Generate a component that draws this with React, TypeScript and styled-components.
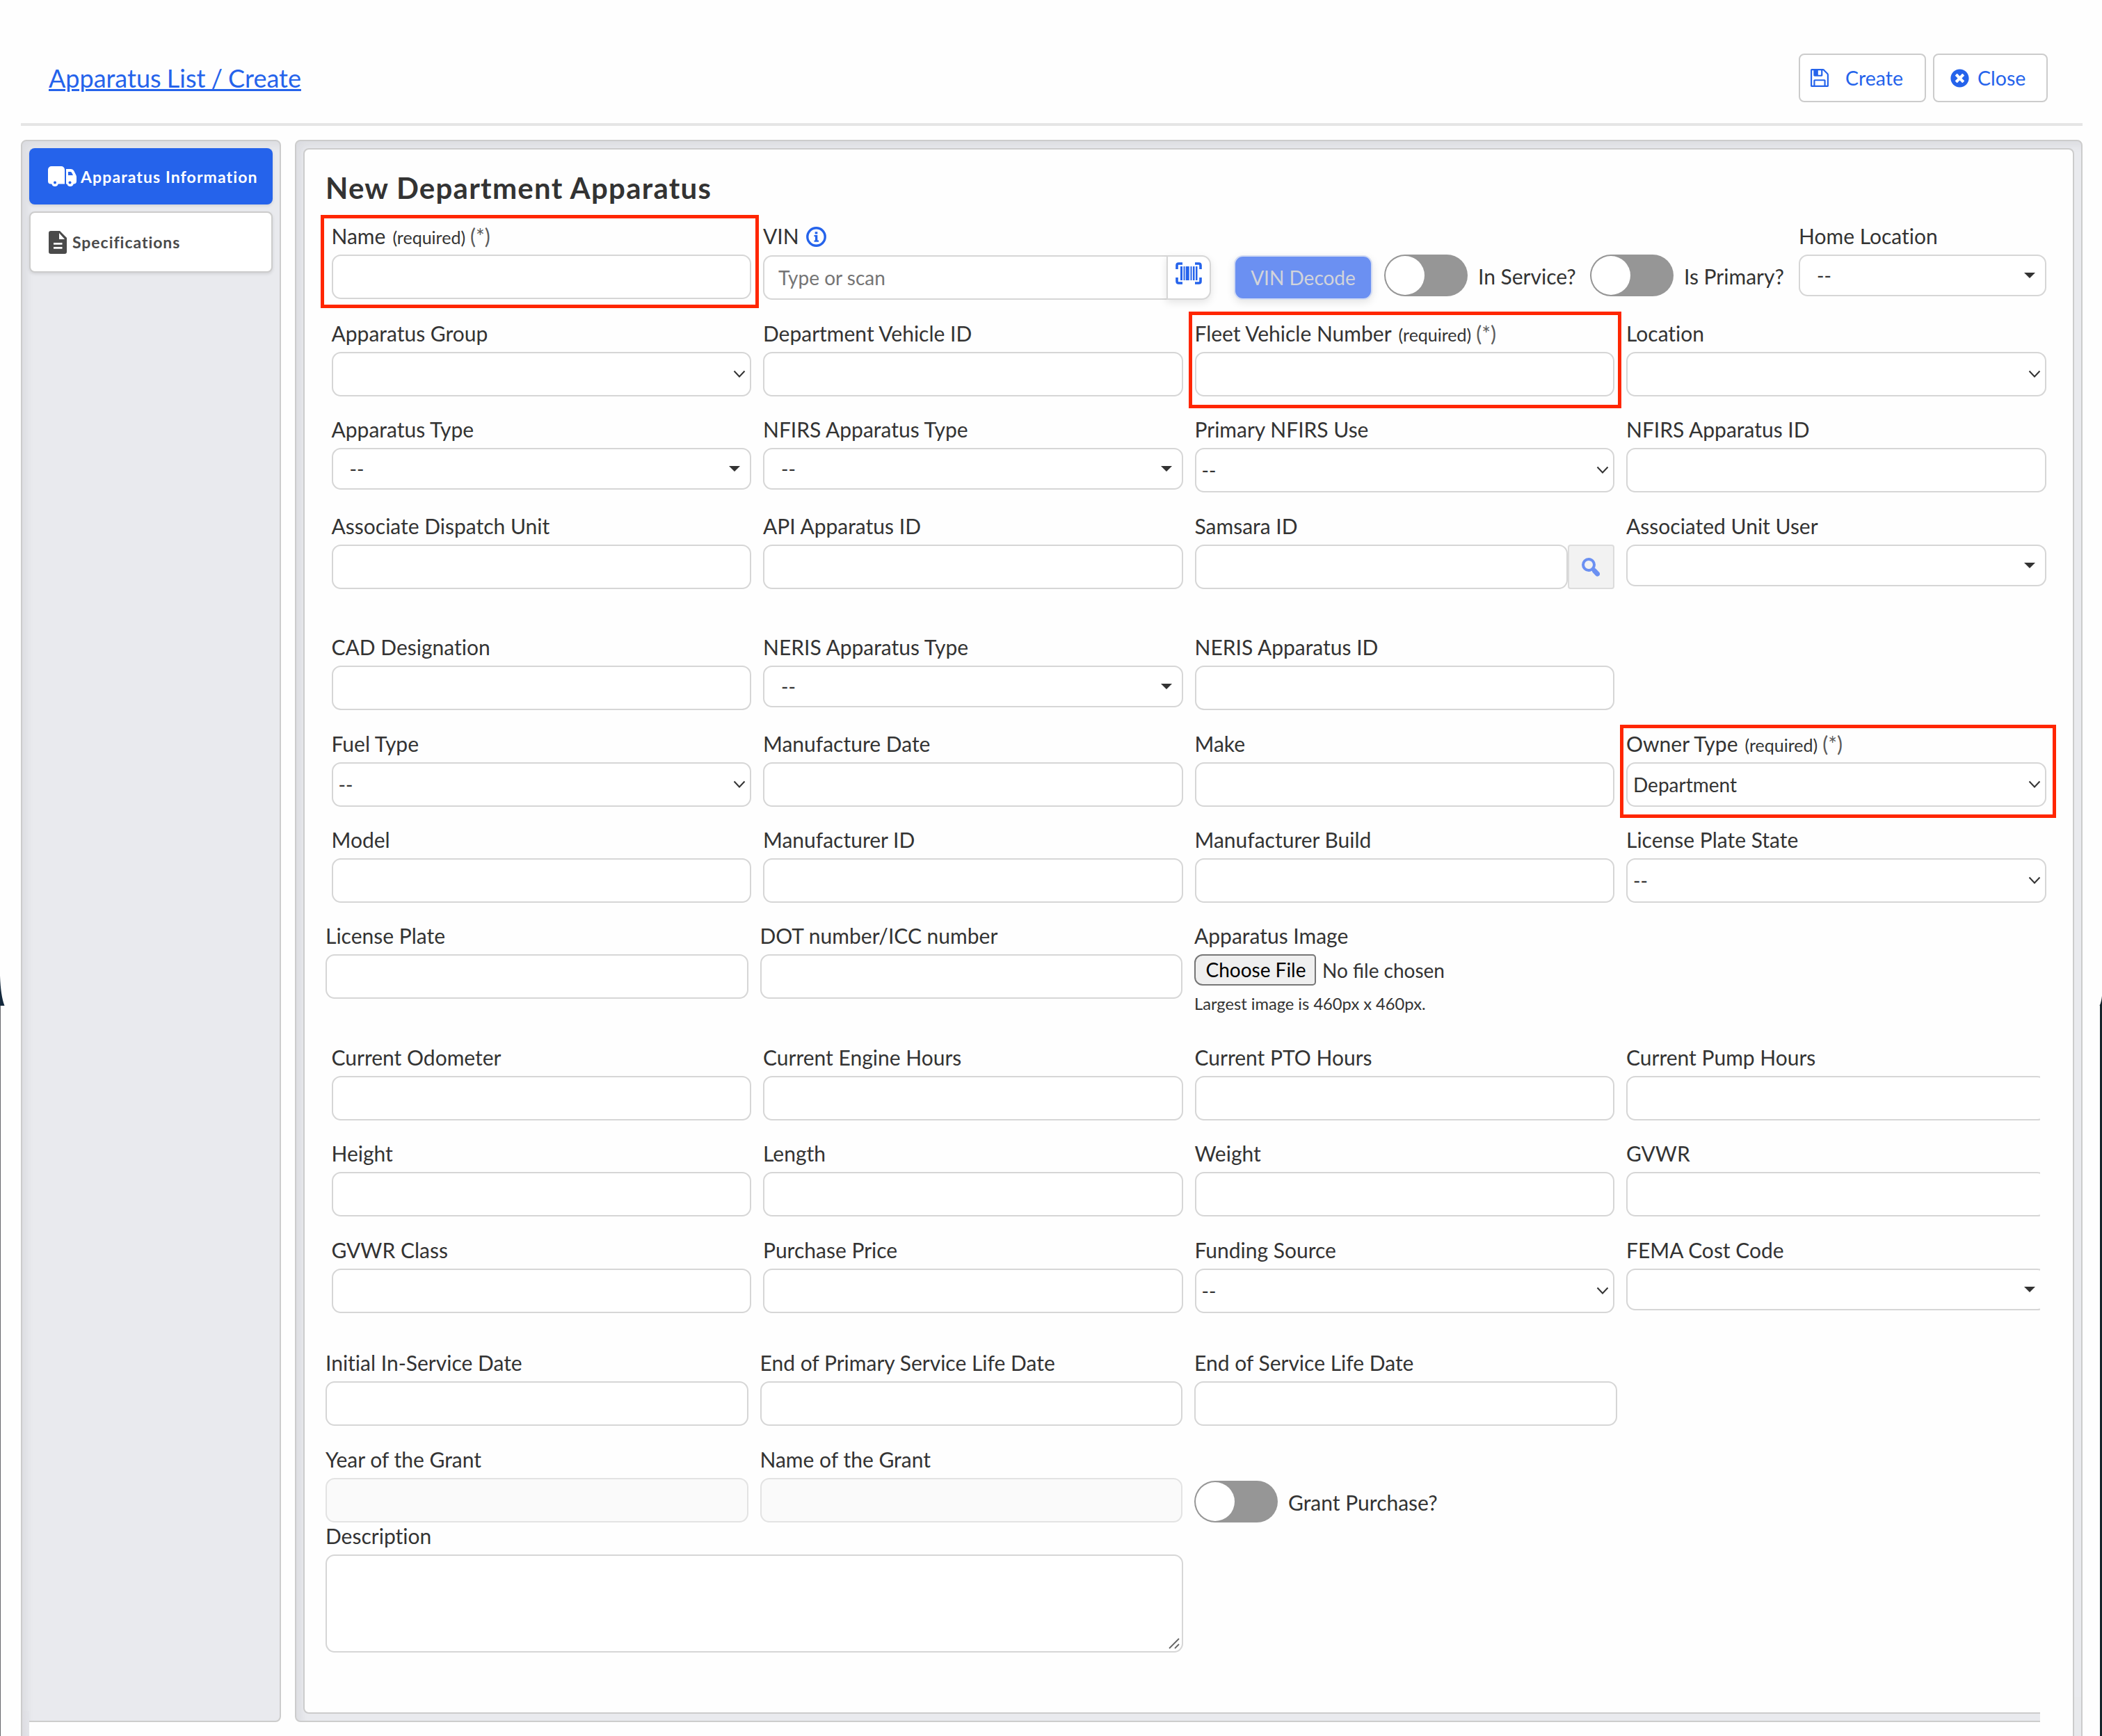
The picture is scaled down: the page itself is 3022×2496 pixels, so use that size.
// src/pages/ApparatusCreate.tsx
import React from 'react';
import styled, { createGlobalStyle, css } from 'styled-components';
import { FaTimesCircle } from 'react-icons/fa';

const GlobalStyle = createGlobalStyle`
  * {
    box-sizing: border-box;
  }

  body {
    margin: 0;
    background: #fefefe;
    color: #333;
    font-family: Lato, sans-serif;
    font-size: 30px;
    font-variant-ligatures: none;
  }
`;

const Page = styled.div`
  position: relative;
  width: 3022px;
  height: 2496px;
  padding: 0 28px 0 30px;
  overflow: hidden;
`;

const TopBar = styled.header`
  display: flex;
  align-items: center;
  justify-content: space-between;
  height: 181px;
  padding: 47px 50px 0 40px;
  border-bottom: 4px solid #e5e5e5;
`;

const Breadcrumb = styled.a`
  color: #2563eb;
  font-size: 36px;
  line-height: 44px;
  text-decoration: underline;
  text-decoration-thickness: 3px;
  word-spacing: -1px;
`;

const TopActions = styled.div`
  display: flex;
  gap: 10px;
`;

const ActionButton = styled.button<{ $width: number; $gap: number }>`
  display: flex;
  align-items: center;
  gap: ${({ $gap }) => $gap}px;
  width: ${({ $width }) => $width}px;
  height: 70px;
  padding: 0 0 0 15px;
  border: 2px solid #ccc;
  border-radius: 8px;
  background: #fff;
  color: #2563eb;
  font: 28.5px Lato, sans-serif;
`;

const CloseButton = styled(ActionButton)`
  padding-left: 23px;
`;

const Columns = styled.div`
  display: flex;
  gap: 20px;
  margin-top: 20px;
  height: 2275px;
`;

const greyBox = css`
  border: 2px solid #ccc;
  border-radius: 8px;
  background: #e9eaee;
  box-shadow: inset 8px 8px 12px -2px rgba(40, 40, 60, 0.07);
`;

const Sidebar = styled.nav`
  ${greyBox}
  display: flex;
  flex-direction: column;
  gap: 10px;
  width: 374px;
  padding: 10px;
`;

const SidebarItem = styled.div<{ $active?: boolean }>`
  display: flex;
  align-items: center;
  gap: ${({ $active }) => ($active ? 6 : 8)}px;
  height: ${({ $active }) => ($active ? 81 : 88)}px;
  padding-left: ${({ $active }) => ($active ? 27 : 26)}px;
  border: ${({ $active }) => ($active ? 'none' : '2px solid #ccc')};
  border-radius: 8px;
  background: ${({ $active }) => ($active ? '#2563eb' : '#fff')};
  box-shadow: 0 2px 4px rgba(0, 0, 0, 0.1);
  color: ${({ $active }) => ($active ? '#fff' : '#4a4a4a')};
  font-size: 23px;
  font-weight: 700;
  letter-spacing: ${({ $active }) => ($active ? 1.1 : 0.95)}px;
  white-space: nowrap;
`;

const Panel = styled.main`
  ${greyBox}
  width: 2570px;
  padding: 10px;
`;

const Card = styled.section`
  height: 2251px;
  padding: 30px 0 0 30px;
  border: 2px solid #ccc;
  border-radius: 8px;
  background: #fefefe;
`;

const Heading = styled.h1`
  margin: 0 0 29px;
  font-size: 42px;
  font-weight: 700;
  letter-spacing: 1.25px;
  line-height: 50px;
`;

/* one line of fields; inset rows start a little further right and use narrower columns */
const Row = styled.div<{ $top?: number; $inset?: boolean }>`
  display: grid;
  grid-template-columns: repeat(4, ${({ $inset }) => ($inset ? 603.5 : 607.5)}px);
  column-gap: 17px;
  height: 106px;
  margin-top: ${({ $top }) => $top ?? 0}px;
  padding-left: ${({ $inset }) => ($inset ? 8.5 : 0)}px;
`;

/* the measurements block is cut off just before its right edge */
const ClippedRows = styled.div`
  width: 2465px;
  overflow: hidden;
`;

const FieldBox = styled.div`
  position: relative;
  min-width: 0;
`;

const Label = styled.label`
  display: flex;
  align-items: baseline;
  height: 42px;
  line-height: 30px;
  white-space: pre;

  small {
    margin-left: 10px;
    font-size: 25px;
  }

  span {
    margin-left: 7px;
    color: #5c5c5c;
  }
`;

const control = css`
  display: flex;
  align-items: center;
  width: 100%;
  height: 64px;
  border: 2px solid #d6d6d6;
  border-radius: 13px;
  background: #fff;
`;

const Input = styled.div<{ $disabled?: boolean }>`
  ${control}
  ${({ $disabled }) =>
    $disabled && 'border-color: #e3e3e3; background: #fafafa;'}
`;

const NativeSelect = styled.div`
  ${control}
  justify-content: space-between;
  padding: 0 6px 0 8px;
  font-size: 28px;
`;

const SearchSelect = styled.div`
  ${control}
  justify-content: space-between;
  height: 60px;
  padding: 0 14px 0 24px;
  font-size: 28px;
`;

const Highlight = styled.div<{ $box: [number, number, number, number] }>`
  position: absolute;
  left: ${({ $box }) => $box[0]}px;
  top: ${({ $box }) => $box[1]}px;
  width: ${({ $box }) => $box[2]}px;
  height: ${({ $box }) => $box[3]}px;
  border: 5px solid #ff2600;
`;

const VinRow = styled.div`
  display: flex;
  align-items: flex-start;
  height: 106px;
  padding-left: 8.5px;
`;

const NameColumn = styled.div`
  width: 603px;
  margin-right: 17.5px;
`;

const VinColumn = styled.div`
  width: 644px;
  margin-right: 33px;

  label svg {
    align-self: flex-start;
    margin: 2px 0 0 10px;
  }
`;

const VinGroup = styled.div`
  display: flex;
  margin-top: 1px;
`;

const VinInput = styled.input`
  width: 580px;
  height: 64px;
  padding: 0 0 0 20px;
  border: 2px solid #d6d6d6;
  border-right: 0;
  border-radius: 13px 0 0 13px;
  background: #fff;
  font: 28px Lato, sans-serif;

  &::placeholder {
    color: #757575;
  }
`;

const ScanButton = styled.button`
  display: flex;
  align-items: flex-start;
  width: 64px;
  height: 64px;
  padding: 8px 0 0 11px;
  border: 2px solid #d6d6d6;
  border-radius: 0 13px 13px 0;
  background: #fff;
  box-shadow: 0 4px 12px rgba(0, 0, 0, 0.1);
`;

const DecodeButton = styled.button`
  width: 199px;
  height: 64px;
  margin: 43px 17px 0 0;
  padding: 0;
  border: 2px solid #d3dcf3;
  border-radius: 13px;
  background: #6b90f2;
  box-shadow: 0 4px 12px rgba(0, 0, 0, 0.1);
  color: #d2d4da;
  font: 28px Lato, sans-serif;
`;

const ToggleField = styled.div<{ $top: number; $width?: number }>`
  display: flex;
  align-items: flex-start;
  gap: 15px;
  width: ${({ $width }) => ($width ? `${$width}px` : 'auto')};
  height: 60px;
  margin-top: ${({ $top }) => $top}px;
  white-space: nowrap;
  font-size: 30px;
  line-height: 63px;
`;

const Toggle = styled.span`
  flex: none;
  width: 120px;
  height: 60px;
  padding: 2px;
  border-radius: 30px;
  background: #969696;

  &::before {
    content: '';
    display: block;
    width: 56px;
    height: 56px;
    border-radius: 50%;
    background: #fff;
  }
`;

const HomeColumn = styled.div`
  width: 356px;
`;

const SearchGroup = styled.div`
  display: grid;
  grid-template-columns: 536px 67.5px;
`;

const SearchButton = styled.button`
  display: flex;
  align-items: center;
  justify-content: center;
  height: 64px;
  padding: 0;
  border: 2px solid #dcdcdc;
  border-radius: 4px;
  background: #f2f2f2;
`;

const FilePicker = styled.div`
  display: flex;
  align-items: center;
  gap: 9px;
  font-size: 28px;
  font-variant-ligatures: normal;
  white-space: nowrap;
`;

const FileButton = styled.button`
  width: 175px;
  height: 45px;
  padding: 0 0 2px 2px;
  border: 2px solid #767676;
  border-radius: 12px 5px 5px 12px;
  background: #efefef;
  color: #000;
  font: 28px Lato, sans-serif;
  font-variant-ligatures: none;
`;

const FileHint = styled.div`
  margin-top: 11px;
  font-size: 23.7px;
  line-height: 30px;
  white-space: nowrap;
`;

const Description = styled.div`
  margin-top: 4px;
`;

const TextArea = styled.div`
  display: flex;
  align-items: flex-end;
  justify-content: flex-end;
  width: 1233px;
  height: 141px;
  padding: 0 2px 2px 0;
  border: 2px solid #d6d6d6;
  border-radius: 13px;
  background: #fff;
`;

/* outer wrapper peeking out under the two boxes */
const WrapperLeft = styled.div`
  position: absolute;
  left: 30px;
  top: 2460px;
  width: 12px;
  height: 36px;
  border-left: 2px solid #ccc;
  background: linear-gradient(90deg, #dddde2, #e3e4e9);
`;

const WrapperRight = styled.div`
  position: absolute;
  left: 2933px;
  top: 2440px;
  width: 61px;
  height: 56px;
  border-right: 2px solid #ccc;
  background: linear-gradient(90deg, #fefefe 47px, #ccc 47px, #ccc 49px, #e8e9ec 49px);
`;

const EdgeShape = styled.svg`
  position: absolute;
  top: 1400px;
`;

const LeftEdge = styled(EdgeShape)`
  left: 0;
`;

const RightEdge = styled(EdgeShape)`
  right: 0;
`;

const SaveIcon = () => (
  <svg width="26" height="26" viewBox="128 128 1536 1536" fill="#2563eb">
    <path d="M512 1536h768v-384h-768v384zm896 0h128v-896q0-14-10-38.500t-20-34.500l-281-281q-10-10-34-20t-39-10v416q0 40-28 68t-68 28h-576q-40 0-68-28t-28-68v-416h-128v1280h128v-416q0-40 28-68t68-28h832q40 0 68 28t28 68v416zm-384-928v-320q0-13-9.500-22.500t-22.500-9.500h-192q-13 0-22.500 9.500t-9.500 22.500v320q0 13 9.500 22.500t22.500 9.500h192q13 0 22.500-9.500t9.500-22.500zm640 32v928q0 40-28 68t-68 28h-1344q-40 0-68-28t-28-68v-1344q0-40 28-68t68-28h928q40 0 88 20t76 48l280 280q28 28 48 76t20 88z" />
  </svg>
);

const TruckIcon = () => (
  <svg width="41" height="29" viewBox="0 0 41 29">
    <path
      fill="#fff"
      fillRule="evenodd"
      d="M5 0h14a5 5 0 0 1 5 5v20.500h-9.200a5 5 0 0 1-9.600 0H4a4 4 0 0 1-4-4V5a5 5 0 0 1 5-5zM26 4h7q3 0 4.200 2.500l3 6q.8 1.500.8 3v6q0 4-4.200 4a5 5 0 0 1-9.600 0H26zM29 8v5h7l-2-4q-.6-1-2-1z"
    />
    <circle cx="10" cy="23.500" r="2" fill="#2563eb" />
    <circle cx="31.500" cy="23.500" r="2" fill="#2563eb" />
  </svg>
);

const FileIcon = () => (
  <svg width="26" height="33" viewBox="0 0 26 33">
    <path fill="#4a4a4a" d="M3 0h13l10 10v20a3 3 0 0 1-3 3H3a3 3 0 0 1-3-3V3a3 3 0 0 1 3-3z" />
    <path fill="#fff" d="M15 3v9h8zM7 17h12.500v2.700H7zM7 23h12.500v2.700H7z" />
  </svg>
);

const InfoIcon = () => (
  <svg width="29" height="29" viewBox="0 0 29 29" fill="#2563eb">
    <circle cx="14.500" cy="14.500" r="12.700" fill="none" stroke="#2563eb" strokeWidth="3.400" />
    <path d="M12.700 7.200h3.600v3.300h-3.600zM11.500 12h4.800v7.500h1.700v2.200h-6.500v-2.200h1.500v-5.300h-1.500z" />
  </svg>
);

const BarcodeIcon = () => (
  <svg width="38" height="32" viewBox="0 0 38 32" fill="#2563eb">
    <path
      d="M2 10V4.500Q2 2 4.500 2H10M28 2h5.500Q36 2 36 4.500V10M36 22v5.500q0 2.500-2.500 2.500H28M10 30H4.500Q2 30 2 27.500V22"
      fill="none"
      stroke="#2563eb"
      strokeWidth="3.600"
    />
    <path d="M7 6h3v20H7zM11.500 6h2v20h-2zM14.700 6h5v20h-5zM21.500 6h2v20h-2zM25 6h2.500v20H25zM29 6h2.500v20H29z" />
  </svg>
);

const SearchIcon = () => (
  <svg width="26" height="27" viewBox="0 0 26 27" fill="none" stroke="#6b90f2">
    <circle cx="10" cy="10" r="8" strokeWidth="4" />
    <path d="M15.500 15.500l2.500 2.500" strokeWidth="4.600" />
    <path d="M18.500 18.800l4 4.300" strokeWidth="7" strokeLinecap="round" />
  </svg>
);

const Chevron = () => (
  <svg width="18" height="12" viewBox="0 0 18 12">
    <path d="M1.500 1.500L9 9.500l7.500-8" fill="none" stroke="#333" strokeWidth="2" />
  </svg>
);

const Caret = () => (
  <svg width="16" height="8" viewBox="0 0 16 8">
    <path d="M0 0h16L8 8z" fill="#333" />
  </svg>
);

type FieldKind = 'input' | 'disabled' | 'native' | 'search';

interface FieldProps {
  label: string;
  kind?: FieldKind;
  value?: string;
  required?: boolean;
  highlight?: [number, number, number, number];
}

const Control: React.FC<{ kind: FieldKind; value: string }> = ({ kind, value }) => {
  if (kind === 'native') {
    return (
      <NativeSelect>
        <span>{value}</span>
        <Chevron />
      </NativeSelect>
    );
  }
  if (kind === 'search') {
    return (
      <SearchSelect>
        <span>{value}</span>
        <Caret />
      </SearchSelect>
    );
  }
  return <Input $disabled={kind === 'disabled'} />;
};

const Field: React.FC<FieldProps> = ({
  label,
  kind = 'input',
  value = '',
  required,
  highlight,
}) => (
  <FieldBox>
    <Label>
      {label}
      {required && (
        <>
          <small>(required)</small>
          <span>(*)</span>
        </>
      )}
    </Label>
    <Control kind={kind} value={value} />
    {highlight && <Highlight $box={highlight} />}
  </FieldBox>
);

const App: React.FC = () => (
  <Page>
    <GlobalStyle />

    <TopBar>
      <Breadcrumb>Apparatus List / Create</Breadcrumb>
      <TopActions>
        <ActionButton $width={183} $gap={24}>
          <SaveIcon />
          Create
        </ActionButton>
        <CloseButton $width={165} $gap={12}>
          <FaTimesCircle size={27} />
          Close
        </CloseButton>
      </TopActions>
    </TopBar>

    <Columns>
      <Sidebar>
        <SidebarItem $active>
          <TruckIcon />
          Apparatus Information
        </SidebarItem>
        <SidebarItem>
          <FileIcon />
          Specifications
        </SidebarItem>
      </Sidebar>

      <Panel>
        <Card>
          <Heading>New Department Apparatus</Heading>

          {/* Name, VIN and status */}
          <VinRow>
            <NameColumn>
              <Field label="Name" required highlight={[-16, -15, 630, 134]} />
            </NameColumn>
            <VinColumn>
              <Label>
                VIN
                <InfoIcon />
              </Label>
              <VinGroup>
                <VinInput placeholder="Type or scan" />
                <ScanButton>
                  <BarcodeIcon />
                </ScanButton>
              </VinGroup>
            </VinColumn>
            <DecodeButton>VIN Decode</DecodeButton>
            <ToggleField $top={42} $width={296}>
              <Toggle />
              In Service?
            </ToggleField>
            <ToggleField $top={42} $width={300}>
              <Toggle />
              Is Primary?
            </ToggleField>
            <HomeColumn>
              <Field label="Home Location" kind="search" value="--" />
            </HomeColumn>
          </VinRow>

          {/* Identification */}
          <Row $inset $top={34}>
            <Field label="Apparatus Group" kind="native" />
            <Field label="Department Vehicle ID" />
            <Field label="Fleet Vehicle Number" required highlight={[-9, -16, 622, 139]} />
            <Field label="Location" kind="native" />
          </Row>
          <Row $inset $top={32}>
            <Field label="Apparatus Type" kind="search" value="--" />
            <Field label="NFIRS Apparatus Type" kind="search" value="--" />
            <Field label="Primary NFIRS Use" kind="native" value="--" />
            <Field label="NFIRS Apparatus ID" />
          </Row>
          <Row $inset $top={33}>
            <Field label="Associate Dispatch Unit" />
            <Field label="API Apparatus ID" />
            <FieldBox>
              <Label>Samsara ID</Label>
              <SearchGroup>
                <Input />
                <SearchButton>
                  <SearchIcon />
                </SearchButton>
              </SearchGroup>
            </FieldBox>
            <Field label="Associated Unit User" kind="search" />
          </Row>

          {/* Manufacture */}
          <Row $inset $top={68}>
            <Field label="CAD Designation" />
            <Field label="NERIS Apparatus Type" kind="search" value="--" />
            <Field label="NERIS Apparatus ID" />
          </Row>
          <Row $inset $top={33}>
            <Field label="Fuel Type" kind="native" value="--" />
            <Field label="Manufacture Date" />
            <Field label="Make" />
            <Field
              label="Owner Type"
              kind="native"
              value="Department"
              required
              highlight={[-9, -12, 627, 134]}
            />
          </Row>
          <Row $inset $top={32}>
            <Field label="Model" />
            <Field label="Manufacturer ID" />
            <Field label="Manufacturer Build" />
            <Field label="License Plate State" kind="native" value="--" />
          </Row>
          <Row $top={32}>
            <Field label="License Plate" />
            <Field label="DOT number/ICC number" />
            <FieldBox>
              <Label>Apparatus Image</Label>
              <FilePicker>
                <FileButton>Choose File</FileButton>
                No file chosen
              </FilePicker>
              <FileHint>Largest image is 460px x 460px.</FileHint>
            </FieldBox>
          </Row>

          {/* Measurements and cost */}
          <ClippedRows>
            <Row $inset $top={69}>
              <Field label="Current Odometer" />
              <Field label="Current Engine Hours" />
              <Field label="Current PTO Hours" />
              <Field label="Current Pump Hours" />
            </Row>
            <Row $inset $top={32}>
              <Field label="Height" />
              <Field label="Length" />
              <Field label="Weight" />
              <Field label="GVWR" />
            </Row>
            <Row $inset $top={33}>
              <Field label="GVWR Class" />
              <Field label="Purchase Price" />
              <Field label="Funding Source" kind="native" value="--" />
              <Field label="FEMA Cost Code" kind="search" />
            </Row>
          </ClippedRows>

          {/* Service life and grant */}
          <Row $top={56}>
            <Field label="Initial In-Service Date" />
            <Field label="End of Primary Service Life Date" />
            <Field label="End of Service Life Date" />
          </Row>
          <Row $top={33}>
            <Field label="Year of the Grant" kind="disabled" />
            <Field label="Name of the Grant" kind="disabled" />
            <ToggleField $top={46}>
              <Toggle />
              Grant Purchase?
            </ToggleField>
          </Row>
          <Description>
            <Label>Description</Label>
            <TextArea>
              <svg width="18" height="18" viewBox="0 0 18 18">
                <path d="M2 16L16 2M10 16l6-6" fill="none" stroke="#666" strokeWidth="1.800" />
              </svg>
            </TextArea>
          </Description>
        </Card>
      </Panel>
    </Columns>

    <WrapperLeft />
    <WrapperRight />
    <LeftEdge width="7" height="1096" viewBox="0 0 7 1096">
      <path d="M0 3Q1 32 6.500 46H0z" fill="#14283c" />
      <path d="M0 46h1v1050H0z" fill="#66686c" />
    </LeftEdge>
    <RightEdge width="4" height="1096" viewBox="0 0 4 1096">
      <path d="M4 32Q3 41 .5 46H1v1050h3z" fill="#14242a" />
    </RightEdge>
  </Page>
);

export default App;
